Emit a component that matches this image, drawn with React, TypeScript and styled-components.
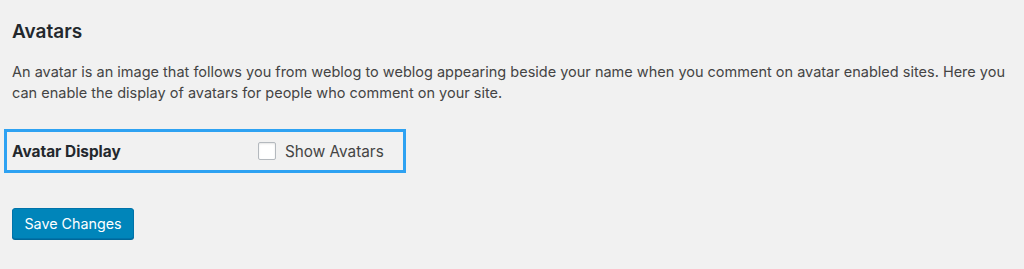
import React from "react";
import styled, { createGlobalStyle } from "styled-components";

const Global = createGlobalStyle`
  html, body { margin: 0; padding: 0; background: #f1f1f1; }
  body { font-family: Inter, "Liberation Sans", Arial, sans-serif; }
`;

const Page = styled.div`
  width: 1024px;
  height: 269px;
  box-sizing: border-box;
  padding: 20px 4px 0 12px;
  background: #f1f1f1;
  color: #444;
  overflow: hidden;
`;

const Title = styled.h2`
  margin: 0;
  font-size: 19px;
  line-height: 24px;
  font-weight: 600;
  color: #23282d;
`;

const Intro = styled.p`
  margin: 17px 0 0 0;
  font-size: 14.5px;
  line-height: 21px;
  color: #444;
`;

const Highlight = styled.div`
  margin: 26px 0 0 -8px;
  width: 402px;
  height: 44px;
  box-sizing: border-box;
  border: 3px solid #2ea2f2;
  display: flex;
  align-items: center;
  padding-left: 5px;
`;

const FieldLabel = styled.div`
  width: 246px;
  font-size: 15.4px;
  font-weight: 700;
  color: #23282d;
`;

const CheckLabel = styled.label`
  display: flex;
  align-items: center;
  gap: 9px;
  font-size: 15.3px;
  color: #444;
`;

const Box = styled.span`
  width: 18px;
  height: 18px;
  box-sizing: border-box;
  border: 1px solid #b4b9be;
  border-radius: 2px;
  background: #fff;
  box-shadow: inset 0 1px 2px rgba(0, 0, 0, 0.1);
`;

const Button = styled.button`
  margin-top: 35px;
  width: 122px;
  height: 31px;
  border: 1px solid #0073aa;
  border-radius: 3px;
  background: #0085ba;
  color: #fff;
  font-family: Inter, "Liberation Sans", Arial, sans-serif;
  font-size: 14.3px;
  padding: 0;
  box-shadow: 0 1px 0 #006799;
  cursor: pointer;
`;

export default function App() {
  return (
    <Page>
      <Global />
      <Title>Avatars</Title>
      <Intro>
        An avatar is an image that follows you from weblog to weblog appearing beside your name when you comment on avatar enabled sites. Here you can enable the display of avatars for people who comment on your site.
      </Intro>
      <Highlight>
        <FieldLabel>Avatar Display</FieldLabel>
        <CheckLabel>
          <Box />
          Show Avatars
        </CheckLabel>
      </Highlight>
      <Button>Save Changes</Button>
    </Page>
  );
}
